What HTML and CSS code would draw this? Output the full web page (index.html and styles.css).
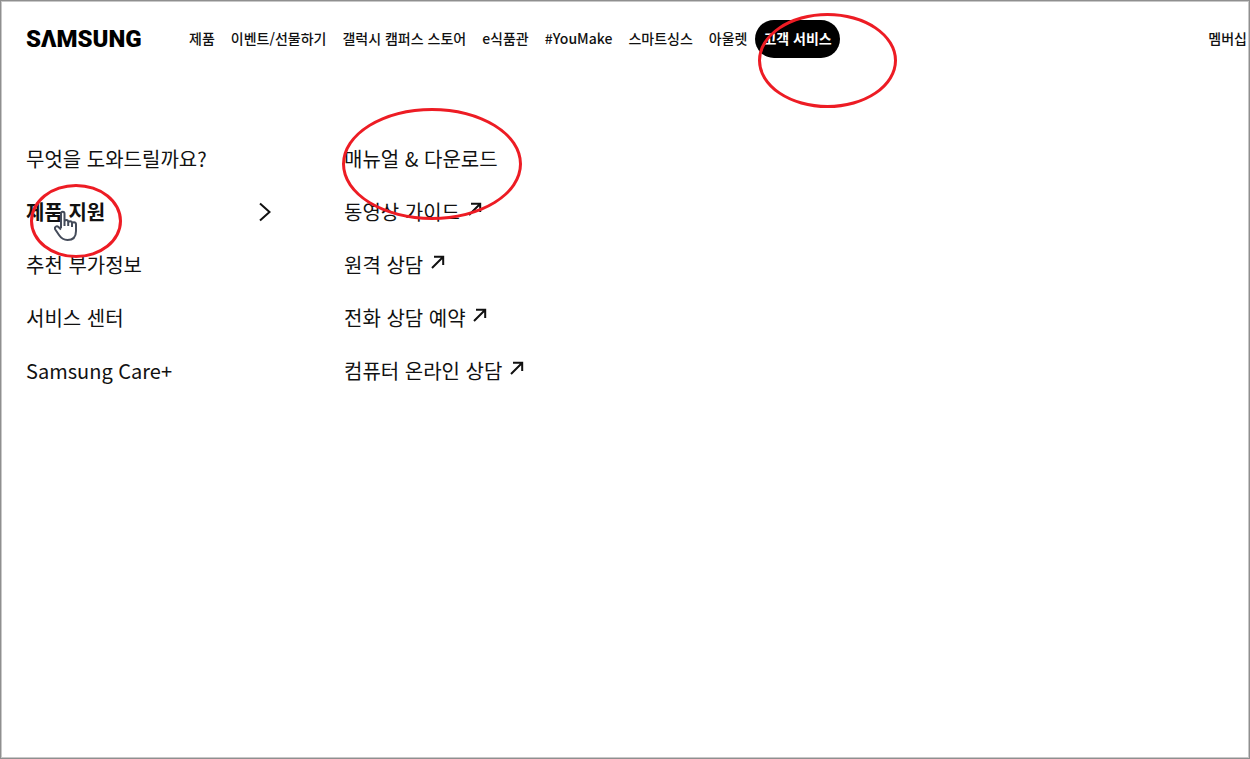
FILE: index.html
```html
<!DOCTYPE html>
<html lang="ko">
<head>
  <meta charset="UTF-8">
  <meta name="viewport" content="width=device-width, initial-scale=1.0">
  <title>Samsung 고객 서비스</title>
  <link rel="stylesheet" href="styles.css">
</head>
<body>
  <div class="page">
    <header class="header">
      <a class="logo" href="#" aria-label="Samsung">SΛMSUNG</a>
      <nav class="nav">
        <a href="#">제품</a>
        <a href="#">이벤트/선물하기</a>
        <a href="#">갤럭시 캠퍼스 스토어</a>
        <a href="#">e식품관</a>
        <a href="#">#YouMake</a>
        <a href="#">스마트싱스</a>
        <a href="#">아울렛</a>
        <a href="#" class="active">고객 서비스<span class="mark mark-service"></span></a>
      </nav>
      <a class="membership" href="#">멤버십</a>
    </header>

    <!-- 고객 서비스 메뉴 -->
    <main class="menu">
      <ul class="menu-list">
        <li><a href="#">무엇을 도와드릴까요?</a></li>
        <li class="selected">
          <a href="#">제품 지원</a>
          <svg class="chevron" width="14" height="20" viewBox="0 0 14 20"><path d="M2 1.500 11.500 10 2 18.500"/></svg>
          <span class="mark mark-support"></span>
          <svg class="pointer" width="24" height="32" viewBox="0 0 24 32"><path d="M7 18V3.800C7 1.200 10.500 1.200 10.500 3.800V12C10.500 9.300 14.200 9.300 14.200 12V13C14.200 10.500 18 10.500 18 13V14C18 11.700 22 11.700 22 14.500V21C22 27 19 30 13.500 30C9 30 7 28 5 25L1.300 19.500C0 17.200 2.600 15.400 4.500 17L7 19.500M10.500 12V16M14.200 13V16M18 14V17"/></svg>
        </li>
        <li><a href="#">추천 부가정보</a></li>
        <li><a href="#">서비스 센터</a></li>
        <li><a href="#">Samsung Care+</a></li>
      </ul>
      <ul class="menu-list">
        <li><a href="#">매뉴얼 &amp; 다운로드</a><span class="mark mark-manual"></span></li>
        <li><a href="#">동영상 가이드 <svg class="arrow" width="14" height="14" viewBox="0 0 14 14"><path d="M1 13 12 2M3 1.800H12.200V10"/></svg></a></li>
        <li><a href="#">원격 상담 <svg class="arrow" width="14" height="14" viewBox="0 0 14 14"><path d="M1 13 12 2M3 1.800H12.200V10"/></svg></a></li>
        <li><a href="#">전화 상담 예약 <svg class="arrow" width="14" height="14" viewBox="0 0 14 14"><path d="M1 13 12 2M3 1.800H12.200V10"/></svg></a></li>
        <li><a href="#">컴퓨터 온라인 상담 <svg class="arrow" width="14" height="14" viewBox="0 0 14 14"><path d="M1 13 12 2M3 1.800H12.200V10"/></svg></a></li>
      </ul>
    </main>
  </div>
</body>
</html>
```
FILE: styles.css
```css
* {
  box-sizing: border-box;
}

body {
  margin: 0;
  font-family: "Noto Sans CJK KR", sans-serif;
  color: #111;
  background-color: #fff;
}

a {
  color: inherit;
  text-decoration: none;
}

.page {
  min-height: 100vh;
  border: 1px solid #8f8f8f;
  box-shadow: inset 0 0 0 1px #c8c8c8;
}

.header {
  display: flex;
  align-items: center;
  height: 76px;
  padding: 0 2px 0 25px;
}

.logo {
  width: 155px;
  font-family: Roboto, sans-serif;
  font-size: 24px;
  font-weight: 900;
  color: #000;
}

.nav {
  display: flex;
  white-space: nowrap;
}

.nav a {
  position: relative;
  padding: 0 8px;
  font-size: 14px;
  font-weight: 500;
  line-height: 36px;
}

.nav .active {
  padding-bottom: 2px;
  border-radius: 19px;
  background-color: #000;
  color: #fff;
  font-weight: 700;
}

.membership {
  margin-left: auto;
  padding-bottom: 2px;
  font-size: 14px;
  font-weight: 500;
  line-height: 36px;
}

.menu {
  display: flex;
  gap: 72px;
  padding: 55px 25px;
}

.menu-list {
  width: 246px;
  margin: 0;
  padding: 0;
  list-style: none;
  font-size: 20px;
  line-height: 53px;
  white-space: nowrap;
}

.menu-list li {
  display: flex;
  align-items: center;
  justify-content: space-between;
  position: relative;
  height: 53px;
}

.selected {
  font-weight: 700;
}

.chevron,
.arrow,
.pointer {
  fill: none;
  stroke: #111;
  stroke-width: 2;
}

.arrow {
  margin-left: 2px;
  vertical-align: 4px;
}

.pointer {
  position: absolute;
  left: 28px;
  top: 25px;
  fill: #fff;
  stroke: #444b5a;
}

/* 빨간 강조 표시 */
.mark {
  position: absolute;
  z-index: 1;
  border: 3px solid #ed1c24;
  border-radius: 50%;
}

.mark-service {
  left: 3px;
  top: -7px;
  width: 139px;
  height: 95px;
}

.mark-support {
  left: 4px;
  top: -1px;
  width: 92px;
  height: 74px;
}

.mark-manual {
  left: -2px;
  top: -24px;
  width: 180px;
  height: 112px;
}
```
